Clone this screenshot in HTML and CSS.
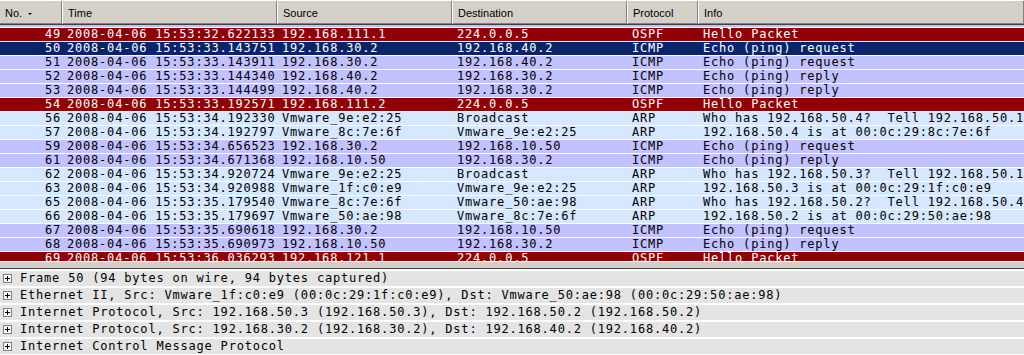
FILE: index.html
```html
<!DOCTYPE html>
<html lang="en">
<head>
    <meta charset="UTF-8">
    <title>Packet List</title>
    <link rel="stylesheet" href="styles.css">
</head>
<body>
    <div class="packet-list">
        <div class="list-header">
            <div class="col-head first">No.<span class="sort-arrow"></span></div>
            <div class="col-head">Time</div>
            <div class="col-head">Source</div>
            <div class="col-head">Destination</div>
            <div class="col-head">Protocol</div>
            <div class="col-head">Info</div>
        </div>

        <div class="list-body">
            <!-- row 48, scrolled almost out of view -->
            <div class="row icmp partial"></div>
            <div class="row ospf"><span class="no">49</span><span>2008-04-06 15:53:32.622133</span><span>192.168.111.1</span><span>224.0.0.5</span><span>OSPF</span><span>Hello Packet</span></div>
            <div class="row selected"><span class="no">50</span><span>2008-04-06 15:53:33.143751</span><span>192.168.30.2</span><span>192.168.40.2</span><span>ICMP</span><span>Echo (ping) request</span></div>
            <div class="row icmp"><span class="no">51</span><span>2008-04-06 15:53:33.143911</span><span>192.168.30.2</span><span>192.168.40.2</span><span>ICMP</span><span>Echo (ping) request</span></div>
            <div class="row icmp"><span class="no">52</span><span>2008-04-06 15:53:33.144340</span><span>192.168.40.2</span><span>192.168.30.2</span><span>ICMP</span><span>Echo (ping) reply</span></div>
            <div class="row icmp"><span class="no">53</span><span>2008-04-06 15:53:33.144499</span><span>192.168.40.2</span><span>192.168.30.2</span><span>ICMP</span><span>Echo (ping) reply</span></div>
            <div class="row ospf"><span class="no">54</span><span>2008-04-06 15:53:33.192571</span><span>192.168.111.2</span><span>224.0.0.5</span><span>OSPF</span><span>Hello Packet</span></div>
            <div class="row arp"><span class="no">56</span><span>2008-04-06 15:53:34.192330</span><span>Vmware_9e:e2:25</span><span>Broadcast</span><span>ARP</span><span>Who has 192.168.50.4?  Tell 192.168.50.1</span></div>
            <div class="row arp"><span class="no">57</span><span>2008-04-06 15:53:34.192797</span><span>Vmware_8c:7e:6f</span><span>Vmware_9e:e2:25</span><span>ARP</span><span>192.168.50.4 is at 00:0c:29:8c:7e:6f</span></div>
            <div class="row icmp"><span class="no">59</span><span>2008-04-06 15:53:34.656523</span><span>192.168.30.2</span><span>192.168.10.50</span><span>ICMP</span><span>Echo (ping) request</span></div>
            <div class="row icmp"><span class="no">61</span><span>2008-04-06 15:53:34.671368</span><span>192.168.10.50</span><span>192.168.30.2</span><span>ICMP</span><span>Echo (ping) reply</span></div>
            <div class="row arp"><span class="no">62</span><span>2008-04-06 15:53:34.920724</span><span>Vmware_9e:e2:25</span><span>Broadcast</span><span>ARP</span><span>Who has 192.168.50.3?  Tell 192.168.50.1</span></div>
            <div class="row arp"><span class="no">63</span><span>2008-04-06 15:53:34.920988</span><span>Vmware_1f:c0:e9</span><span>Vmware_9e:e2:25</span><span>ARP</span><span>192.168.50.3 is at 00:0c:29:1f:c0:e9</span></div>
            <div class="row arp"><span class="no">65</span><span>2008-04-06 15:53:35.179540</span><span>Vmware_8c:7e:6f</span><span>Vmware_50:ae:98</span><span>ARP</span><span>Who has 192.168.50.2?  Tell 192.168.50.4</span></div>
            <div class="row arp"><span class="no">66</span><span>2008-04-06 15:53:35.179697</span><span>Vmware_50:ae:98</span><span>Vmware_8c:7e:6f</span><span>ARP</span><span>192.168.50.2 is at 00:0c:29:50:ae:98</span></div>
            <div class="row icmp"><span class="no">67</span><span>2008-04-06 15:53:35.690618</span><span>192.168.30.2</span><span>192.168.10.50</span><span>ICMP</span><span>Echo (ping) request</span></div>
            <div class="row icmp"><span class="no">68</span><span>2008-04-06 15:53:35.690973</span><span>192.168.10.50</span><span>192.168.30.2</span><span>ICMP</span><span>Echo (ping) reply</span></div>
            <div class="row ospf"><span class="no">69</span><span>2008-04-06 15:53:36.036293</span><span>192.168.121.1</span><span>224.0.0.5</span><span>OSPF</span><span>Hello Packet</span></div>
        </div>
    </div>

    <div class="splitter"></div>

    <div class="details">
        <div class="tree-row">
            <svg class="expander" width="9" height="9" viewBox="0 0 9 9"><rect x="0.5" y="0.5" width="8" height="8" fill="#fff" stroke="#808080"/><path d="M2 4.5h5M4.5 2v5" stroke="#000"/></svg>
            <span>Frame 50 (94 bytes on wire, 94 bytes captured)</span>
        </div>
        <div class="tree-row">
            <svg class="expander" width="9" height="9" viewBox="0 0 9 9"><rect x="0.5" y="0.5" width="8" height="8" fill="#fff" stroke="#808080"/><path d="M2 4.5h5M4.5 2v5" stroke="#000"/></svg>
            <span>Ethernet II, Src: Vmware_1f:c0:e9 (00:0c:29:1f:c0:e9), Dst: Vmware_50:ae:98 (00:0c:29:50:ae:98)</span>
        </div>
        <div class="tree-row">
            <svg class="expander" width="9" height="9" viewBox="0 0 9 9"><rect x="0.5" y="0.5" width="8" height="8" fill="#fff" stroke="#808080"/><path d="M2 4.5h5M4.5 2v5" stroke="#000"/></svg>
            <span>Internet Protocol, Src: 192.168.50.3 (192.168.50.3), Dst: 192.168.50.2 (192.168.50.2)</span>
        </div>
        <div class="tree-row">
            <svg class="expander" width="9" height="9" viewBox="0 0 9 9"><rect x="0.5" y="0.5" width="8" height="8" fill="#fff" stroke="#808080"/><path d="M2 4.5h5M4.5 2v5" stroke="#000"/></svg>
            <span>Internet Protocol, Src: 192.168.30.2 (192.168.30.2), Dst: 192.168.40.2 (192.168.40.2)</span>
        </div>
        <div class="tree-row">
            <svg class="expander" width="9" height="9" viewBox="0 0 9 9"><rect x="0.5" y="0.5" width="8" height="8" fill="#fff" stroke="#808080"/><path d="M2 4.5h5M4.5 2v5" stroke="#000"/></svg>
            <span>Internet Control Message Protocol</span>
        </div>
    </div>
</body>
</html>
```

FILE: styles.css
```css
* {
    margin: 0;
    padding: 0;
    box-sizing: border-box;
}

body {
    background: #fff;
    width: 1024px;
    height: 355px;
    overflow: hidden;
}

/* packet list */

.list-header,
.row {
    display: grid;
    grid-template-columns: 62px 215px 175px 175px 71px 1fr;
}

.list-header {
    height: 25px;
    border-top: 1px solid #fff;
    border-bottom: 1px solid #404040;
    background: #d4d0c8;
}

.col-head {
    height: 23px;
    padding: 3px 0 0 5px;
    line-height: 19px;
    font-family: "Liberation Sans", Arial, sans-serif;
    font-size: 11px;
    color: #000;
    border-left: 1px solid #fff;
    border-right: 1px solid #808080;
    border-bottom: 1px solid #808080;
    white-space: nowrap;
}

.col-head.first {
    border-left: none;
}

.sort-arrow {
    display: inline-block;
    width: 0;
    height: 0;
    margin-left: 6px;
    vertical-align: 2px;
    border-left: 2px solid transparent;
    border-right: 2px solid transparent;
    border-top: 2px solid #000;
}

.list-body {
    height: 237px;
    overflow: hidden;
    border-bottom: 1px solid #fff;
}

.row {
    height: 13px;
    margin-bottom: 1px;
    font-family: "DejaVu Sans Mono", "Liberation Mono", monospace;
    font-size: 12px;
    letter-spacing: 0.8px;
    line-height: 12px;
    color: #000;
}

.row.partial {
    height: 2px;
}

.row span {
    padding-left: 5px;
    white-space: pre;
}

.row span:last-child {
    overflow: hidden;
}

.row .no {
    padding-left: 0;
    padding-right: 1px;
    text-align: right;
}

.row.icmp {
    background: #c2c2ff;
}

.row.arp {
    background: #d6e8ff;
}

.row.ospf {
    background: #900000;
    color: #fff;
}

.row.selected {
    background: #0a246a;
    color: #fff;
}

/* pane splitter */

.splitter {
    height: 7px;
    background: #d4d0c8;
    border-bottom: 1px solid #404040;
}

/* packet details */

.details {
    padding-top: 2px;
    display: flex;
    flex-direction: column;
    gap: 2px;
}

.tree-row {
    height: 15px;
    display: flex;
    align-items: flex-start;
    background: #e4e4e4;
    font-family: "DejaVu Sans Mono", "Liberation Mono", monospace;
    font-size: 12px;
    letter-spacing: 0.8px;
    line-height: 14px;
    white-space: pre;
}

.expander {
    flex: none;
    margin: 3px 8px 0 3px;
}
```
